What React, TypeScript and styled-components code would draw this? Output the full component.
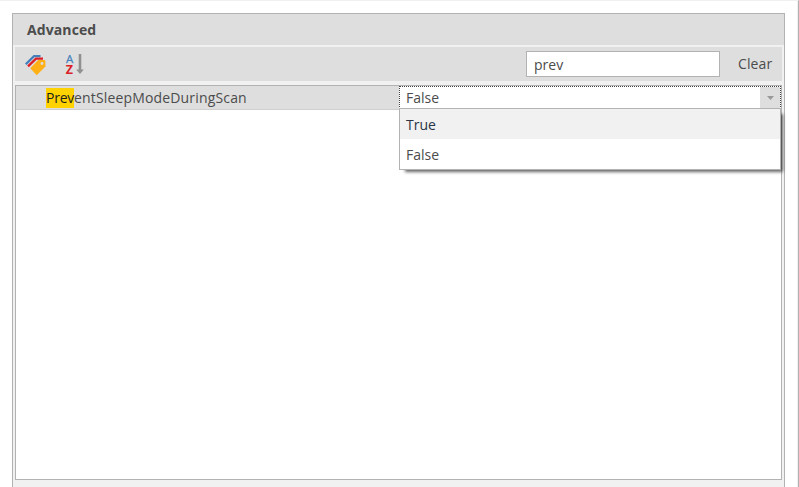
import React, { useState } from "react";
import styled, { createGlobalStyle } from "styled-components";

const GlobalStyle = createGlobalStyle`
  * { box-sizing: border-box; }
  body {
    margin: 0;
    background: #fff;
    overflow: hidden;
    font: 14px/20px "Open Sans", "Noto Sans", sans-serif;
    color: #4c4c4c;
  }
`;

const Window = styled.div`
  width: 799px;
  height: 487px;
  padding: 12px 12px 0;
  border-top: 1px solid #f0f0f0;
  border-right: 1px solid #b0b0b0;
  box-shadow: inset -1px 0 #f0f0f0;
  overflow: hidden;
`;

const Panel = styled.section`
  width: 773px;
  height: 500px;
  border: 1px solid #b2b2b2;
  background: #f1f1f1;
`;

const Header = styled.h1`
  margin: 0;
  height: 31px;
  padding: 6px 0 0 14px;
  background: #dedede;
  font-size: 14px;
  line-height: 20px;
  font-weight: 700;
  letter-spacing: 0.1px;
`;

const Toolbar = styled.div`
  display: flex;
  align-items: flex-start;
  height: 34px;
  margin: 2px 2px 0;
  padding: 4px 10px 0;
  background: #dedede;
`;

const IconButton = styled.button`
  display: block;
  width: 21px;
  height: 26px;
  margin-right: 19px;
  padding: 0;
  border: 0;
  background: none;
  svg { display: block; overflow: visible; }
`;

const Search = styled.input`
  width: 194px;
  height: 26px;
  margin-left: auto;
  padding: 1px 7px;
  border: 1px solid #b2b2b2;
  background: #fff;
  color: inherit;
  font: inherit;
  outline: 0;
`;

const ClearButton = styled.button`
  width: 34px;
  margin: 3px 0 0 18px;
  padding: 0;
  border: 0;
  background: none;
  color: inherit;
  font: inherit;
  letter-spacing: 0.1px;
  white-space: nowrap;
  text-align: left;
`;

const Properties = styled.div`
  height: 395px;
  margin: 4px 2px 0;
  border: 1px solid #b2b2b2;
  background: #fff;
`;

const Row = styled.div`
  display: flex;
  height: 24px;
  background: #dedede;
  border-bottom: 1px solid #cfcfcf;
`;

const Name = styled.div`
  width: 383px;
  padding: 2px 0 0 30px;
  letter-spacing: 0.16px;
`;

const Match = styled.mark`
  display: inline-block;
  height: 20px;
  background: #ffd200;
  color: #1e1e1e;
  letter-spacing: -0.25px;
`;

const Editor = styled.div`
  position: relative;
  display: flex;
  flex: 1;
  height: 23px;
  border: 1px dotted #444;
  border-bottom: 0;
  background: #fff;
`;

const Value = styled.span`
  flex: 1;
  padding: 1px 0 0 6px;
`;

const DropButton = styled.button`
  display: flex;
  justify-content: center;
  width: 20px;
  height: 22px;
  padding: 9px 0 0;
  border: 0;
  background: #dedede;
`;

const Menu = styled.div`
  position: absolute;
  top: 21px;
  left: -1px;
  width: 382px;
  height: 62px;
  border: 1px solid #b2b2b2;
  background: #fff;
  box-shadow: 4px 4px 3px -2px rgba(0, 0, 0, 0.6);
`;

const Option = styled.div<{ $active?: boolean }>`
  height: 30px;
  padding: 6px 6px 4px;
  background: ${(p) => (p.$active ? "#f1f1f1" : "#fff")};
  color: ${(p) => (p.$active ? "#2b3546" : "inherit")};
`;

const TagsIcon = () => (
  <svg width="21" height="24" viewBox="0 0 21 24">
    <path d="M.8 12.2 9 4.1H15.5" fill="none" stroke="#447fbc" strokeWidth="2.3" />
    <path d="M3 14.4 11 6.6H18" fill="none" stroke="#dc2028" strokeWidth="2.3" />
    <path d="M5.2 16.2 13.2 8H19.6L20.4 8.8V14.5L11.7 23.2Z" fill="#ffb016" />
    <circle cx="17" cy="11.5" r="1.4" fill="#dedede" />
  </svg>
);

const SortIcon = () => (
  <svg width="20" height="26" viewBox="0 0 20 26" fontFamily="Open Sans, sans-serif">
    <text x=".9" y="12" fontSize="11.5" fill="#447fbc" stroke="#447fbc" strokeWidth=".25">A</text>
    <text x=".7" y="23" fontSize="12.5" fontWeight="700" fill="#dc2028">Z</text>
    <path d="M13.7 3H16.3V18.5H18.8L15 23 11.2 18.5H13.7Z" fill="#909090" />
  </svg>
);

export default function App() {
  const [query, setQuery] = useState("prev");
  return (
    <Window>
      <GlobalStyle />
      <Panel>
        <Header>Advanced</Header>
        <Toolbar>
          <IconButton aria-label="Categorized"><TagsIcon /></IconButton>
          <IconButton aria-label="Alphabetical"><SortIcon /></IconButton>
          <Search value={query} onChange={(e) => setQuery(e.target.value)} />
          <ClearButton onClick={() => setQuery("")}>Clear</ClearButton>
        </Toolbar>
        <Properties>
          <Row>
            <Name><Match>Prev</Match>entSleepModeDuringScan</Name>
            <Editor>
              <Value>False</Value>
              <DropButton aria-label="Open">
                <svg width="7" height="4"><path d="M0 0H7L3.5 4Z" fill="#999" /></svg>
              </DropButton>
              <Menu>
                <Option $active>True</Option>
                <Option>False</Option>
              </Menu>
            </Editor>
          </Row>
        </Properties>
      </Panel>
    </Window>
  );
}
